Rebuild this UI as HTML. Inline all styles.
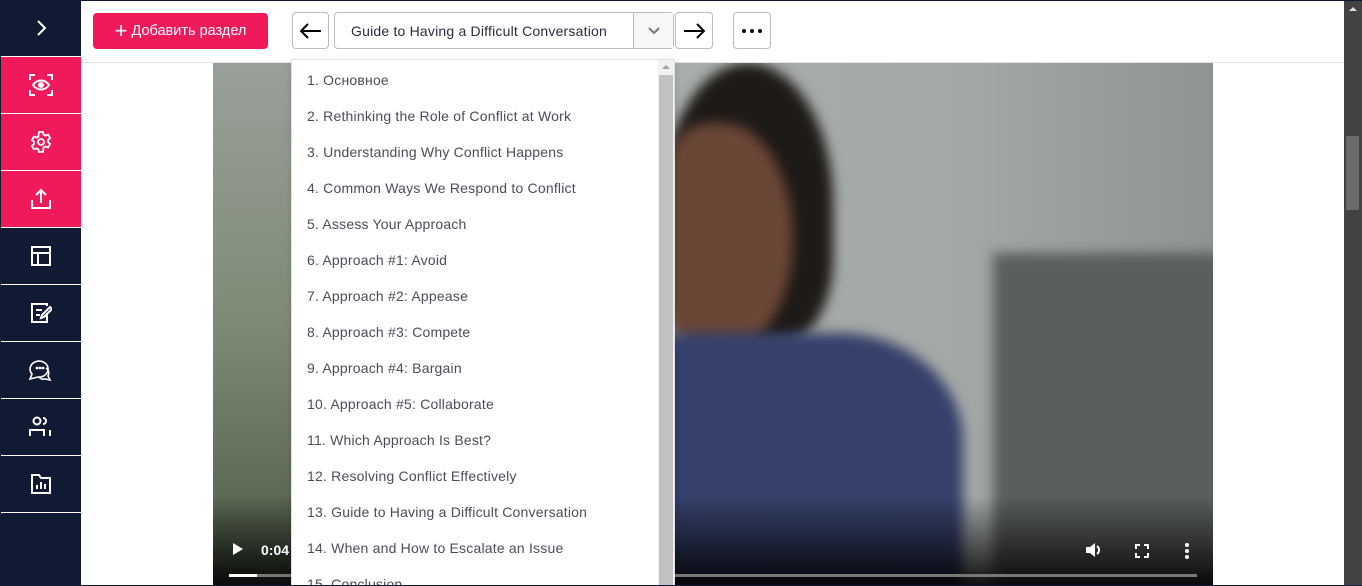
<!DOCTYPE html>
<html><head><meta charset="utf-8"><style>
*{box-sizing:border-box;margin:0;padding:0}
body{width:1362px;height:586px;overflow:hidden;background:#111a33;font-family:"Liberation Sans",sans-serif;position:relative}
.main{position:absolute;left:81px;top:1px;width:1263px;height:584px;background:#fff;overflow:hidden}
.sb{position:absolute;left:1px;top:0;width:80px}
.sb div{height:57px;border-bottom:1px solid #fff;display:flex;align-items:center;justify-content:center}
.sb .p{background:#f01a5b}
.top{position:absolute;left:0;top:0;width:1263px;height:62px;border-bottom:1px solid #e4e4e4;background:#fff}
.btn{position:absolute;border:1px solid #b9bcc8;border-radius:4px;background:#fff;display:flex;align-items:center;justify-content:center}
.add{position:absolute;left:12px;top:12px;width:175px;height:36px;background:#f01a5b;border-radius:4px;color:#fff;font-size:14.5px;display:flex;align-items:center;justify-content:center;gap:4px}
.video{position:absolute;left:132px;top:62px;width:1000px;height:522px;overflow:hidden;background:linear-gradient(90deg,#9da19c 0%,#a9aeaa 45%,#a3a8a6 75%,#8f9492 100%)}
.blur{filter:blur(6px)}
.dd{position:absolute;left:210px;top:58px;width:384px;height:530px;background:#fff;border:1px solid #e2e2e2;box-shadow:0 2px 6px rgba(0,0,0,.15)}
.dd .it{position:absolute;left:15px;font-size:14px;letter-spacing:.2px;color:#4a4d5a;white-space:nowrap}
.dd .scr{position:absolute;right:0;top:0;width:16px;height:100%;background:#f1f1f1}
</style></head><body>
<div class="sb">
 <div style="background:#111a33"><svg width="14" height="18" viewBox="0 0 14 18"><path d="M4 2l7 7-7 7" stroke="#fff" stroke-width="2" fill="none"/></svg></div>
 <div class="p"><svg width="24" height="22" viewBox="0 0 24 22" fill="none" stroke="#fff" stroke-width="2"><path d="M1 6V1h5M18 1h5v5M23 16v5h-5M6 21H1v-5"/><path d="M4 11c4-6 12-6 16 0c-4 6-12 6-16 0z"/><circle cx="12" cy="11" r="2" fill="#fff"/></svg></div>
 <div class="p"><svg width="24" height="24" viewBox="0 0 24 24" fill="none" stroke="#fff" stroke-width="1.8"><path d="M10 2h4l.6 2.6 2 1 2.5-1 2 3.4-2 1.8v2.4l2 1.8-2 3.4-2.5-1-2 1L14 22h-4l-.6-2.6-2-1-2.5 1-2-3.4 2-1.8v-2.4l-2-1.8 2-3.4 2.5 1 2-1z"/><circle cx="12" cy="12" r="3"/></svg></div>
 <div class="p"><svg width="22" height="22" viewBox="0 0 22 22" fill="none" stroke="#fff" stroke-width="2"><path d="M2 12v8h18v-8M11 15V2M6 7l5-5 5 5"/></svg></div>
 <div><svg width="22" height="22" viewBox="0 0 22 22" fill="none" stroke="#fff" stroke-width="2"><rect x="2" y="2" width="18" height="18"/><path d="M2 8h18M8 8v12"/></svg></div>
 <div><svg width="22" height="22" viewBox="0 0 22 22" fill="none" stroke="#fff" stroke-width="2"><path d="M17 11v9H2V2h15v2M6 8h6M6 13h4M11 16l1-3 8-8 2 2-8 8z"/></svg></div>
 <div><svg width="26" height="26" viewBox="0 0 26 26" fill="none" stroke="#fff" stroke-width="1.6"><path d="M4 17a9 8 0 1 1 6 3l-8 2z"/><path d="M18 11a6 6 0 0 1 2 8l2 4-5-1a6 6 0 0 1-6-2"/><circle cx="9" cy="11" r=".6" fill="#fff"/><circle cx="12" cy="11" r=".6" fill="#fff"/><circle cx="15" cy="11" r=".6" fill="#fff"/></svg></div>
 <div><svg width="26" height="22" viewBox="0 0 26 22" fill="none" stroke="#fff" stroke-width="2"><circle cx="9" cy="5" r="3.5"/><path d="M2 20v-6h14v6M15 2a3 3 0 0 1 0 6M21 15h1v5"/></svg></div>
 <div><svg width="22" height="20" viewBox="0 0 22 20" fill="none" stroke="#fff" stroke-width="2"><path d="M2 1h7l2 3h9v15H2z"/><path d="M7 15v-4M11 15V8M15 15v-5"/></svg></div>
</div>
<div class="main">
 <div class="video">
  <div class="blur" style="position:absolute;left:-10px;top:0;width:210px;height:522px;background:linear-gradient(180deg,#9aa09a,#7d8a74 50%,#4c5a44)"></div>
  <div class="blur" style="position:absolute;left:780px;top:190px;width:230px;height:340px;background:#5a5f5c"></div>
  <div class="blur" style="position:absolute;left:450px;top:0;width:170px;height:280px;background:#1e1a18;border-radius:50% 50% 30% 40%"></div>
  <div class="blur" style="position:absolute;left:440px;top:60px;width:140px;height:230px;background:#6a4636;border-radius:40% 50% 50% 40%"></div>
  <div class="blur" style="position:absolute;left:440px;top:270px;width:310px;height:270px;background:#35416b;border-radius:0 40% 0 0"></div>
  <div style="position:absolute;left:0;bottom:0;width:1000px;height:90px;background:linear-gradient(180deg,rgba(0,0,0,0),rgba(0,0,0,.9))"></div>
  <div style="position:absolute;left:20px;top:480px;width:0;height:0;border-left:10px solid #fff;border-top:6px solid transparent;border-bottom:6px solid transparent"></div>
  <div style="position:absolute;left:48px;top:479px;color:#fff;font-size:14px;font-weight:bold">0:04</div>
  <div style="position:absolute;left:16px;top:511px;width:968px;height:3px;background:#777"><div style="width:28px;height:3px;background:#fff"></div></div>
  <svg style="position:absolute;left:872px;top:479px" width="18" height="16" viewBox="0 0 18 16"><path d="M1 5h4l5-4v14l-5-4H1z" fill="#fff"/><path d="M12 4a5 5 0 0 1 0 8" stroke="#fff" stroke-width="2" fill="none"/></svg>
  <svg style="position:absolute;left:922px;top:481px" width="14" height="14" viewBox="0 0 14 14" fill="none" stroke="#fff" stroke-width="2"><path d="M1 5V1h4M9 1h4v4M13 9v4H9M5 13H1V9"/></svg>
  <svg style="position:absolute;left:972px;top:480px" width="4" height="16"><circle cx="2" cy="2" r="2" fill="#fff"/><circle cx="2" cy="8" r="2" fill="#fff"/><circle cx="2" cy="14" r="2" fill="#fff"/></svg>
 </div>
 <div class="top">
  <div class="add"><span style="font-size:22px;font-weight:300;line-height:1">+</span>Добавить раздел</div>
  <div class="btn" style="left:211px;top:11px;width:37px;height:37px"><svg width="22" height="16" viewBox="0 0 22 16" fill="none" stroke="#000" stroke-width="2"><path d="M21 8H2M8 1L1 8l7 7"/></svg></div>
  <div class="btn" style="left:253px;top:11px;width:340px;height:37px;justify-content:flex-start;padding-left:16px;font-size:14px;letter-spacing:.2px;color:#2a2e3e">Guide to Having a Difficult Conversation
   <div style="position:absolute;right:0;top:0;width:40px;height:35px;border-left:1px solid #b9bcc8;background:#f6f7f9;display:flex;align-items:center;justify-content:center"><svg width="12" height="8" viewBox="0 0 12 8" fill="none" stroke="#777" stroke-width="2"><path d="M1 1l5 5 5-5"/></svg></div></div>
  <div class="btn" style="left:594px;top:11px;width:38px;height:37px"><svg width="22" height="16" viewBox="0 0 22 16" fill="none" stroke="#000" stroke-width="2"><path d="M1 8h19M14 1l7 7-7 7"/></svg></div>
  <div class="btn" style="left:652px;top:11px;width:38px;height:37px"><svg width="20" height="4"><circle cx="2" cy="2" r="2"/><circle cx="10" cy="2" r="2"/><circle cx="18" cy="2" r="2"/></svg></div>
 </div>
 <div class="dd">
  <div class="it" style="top:12px">1. Основное</div>
  <div class="it" style="top:48px">2. Rethinking the Role of Conflict at Work</div>
  <div class="it" style="top:84px">3. Understanding Why Conflict Happens</div>
  <div class="it" style="top:120px">4. Common Ways We Respond to Conflict</div>
  <div class="it" style="top:156px">5. Assess Your Approach</div>
  <div class="it" style="top:192px">6. Approach #1: Avoid</div>
  <div class="it" style="top:228px">7. Approach #2: Appease</div>
  <div class="it" style="top:264px">8. Approach #3: Compete</div>
  <div class="it" style="top:300px">9. Approach #4: Bargain</div>
  <div class="it" style="top:336px">10. Approach #5: Collaborate</div>
  <div class="it" style="top:372px">11. Which Approach Is Best?</div>
  <div class="it" style="top:408px">12. Resolving Conflict Effectively</div>
  <div class="it" style="top:444px">13. Guide to Having a Difficult Conversation</div>
  <div class="it" style="top:480px">14. When and How to Escalate an Issue</div>
  <div class="it" style="top:516px">15. Conclusion</div>
  <div class="scr"><div style="position:absolute;left:4px;top:5px;border-left:4px solid transparent;border-right:4px solid transparent;border-bottom:4px solid #a3a3a3"></div><div style="position:absolute;left:1px;top:15px;width:14px;height:520px;background:#c1c1c1"></div></div>
 </div>
</div>
<div style="position:absolute;left:1344px;top:1px;width:18px;height:584px;background:#424242">
 <div style="position:absolute;left:5px;top:6px;border-left:4px solid transparent;border-right:4px solid transparent;border-bottom:4px solid #ddd"></div>
 <div style="position:absolute;left:2px;top:135px;width:13px;height:74px;background:#6b6b6b"></div>
</div>
</body></html>
